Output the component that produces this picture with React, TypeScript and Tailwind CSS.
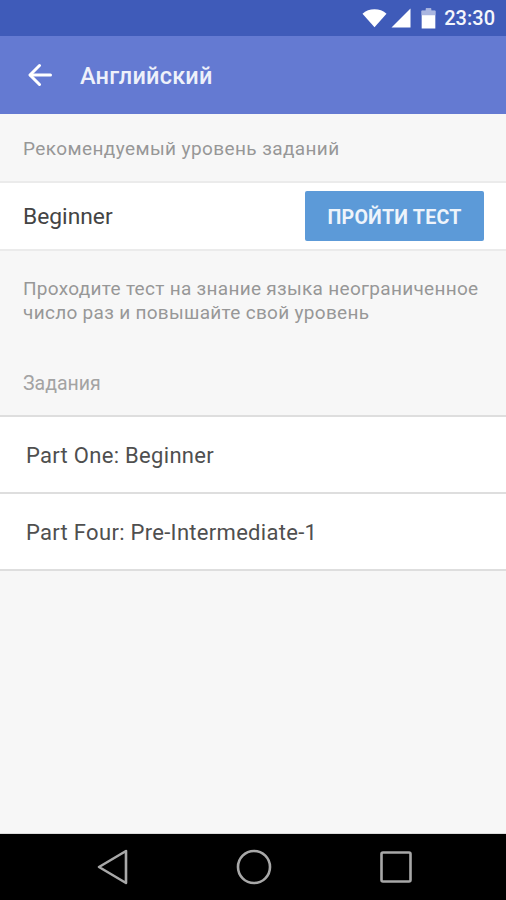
import React from 'react';

const StatusBar = () => (
  <div className="h-9 bg-[#3f5bb9] flex items-center justify-end pr-[11px] shrink-0">
    <svg width="25" height="20" viewBox="0 0 26 20" className="mr-[4px]">
      <path d="M0.5 5.5 C7 -0.5 19 -0.5 25.5 5.5 L13 19.5 Z" fill="#ffffff" />
    </svg>
    <svg width="20" height="20" viewBox="0 0 20 20" className="mr-[10px]">
      <path d="M0.5 19.5 L19.5 0.5 V19.5 Z" fill="#ffffff" />
    </svg>
    <svg width="15" height="21" viewBox="0 0 14 20" className="mr-[8px]">
      <path d="M4.5 0.5 H9.5 V2.5 H13.5 V19.5 H0.5 V2.5 H4.5 Z" fill="#ffffff" />
      <path d="M4.5 0.5 H9.5 V2.5 H13.5 V7 H0.5 V2.5 H4.5 Z" fill="#aab6e0" />
    </svg>
    <span className="text-[20px] leading-none font-medium text-[#f4f6fc]">23:30</span>
  </div>
);

const Toolbar = () => (
  <div className="h-[78px] bg-[#647ad2] flex items-center pl-[28px] shrink-0">
    <svg width="24" height="24" viewBox="0 0 24 24" fill="none" stroke="#ffffff" strokeWidth="3" strokeLinecap="round" strokeLinejoin="round">
      <path d="M22.5 12 H2.5" />
      <path d="M11.5 2.5 L2 12 L11.5 21.5" />
    </svg>
    <span className="ml-[28px] mt-[3px] text-[23.5px] leading-none font-medium text-[#eef1fa] tracking-[0.2px]">Английский</span>
  </div>
);

const NavBar = () => (
  <div className="h-[66px] bg-black flex items-center pl-[97px] shrink-0">
    <svg width="32" height="36" viewBox="0 0 32 36" fill="none" stroke="#a8a8a8" strokeWidth="2.6" strokeLinejoin="round">
      <path d="M2 18 L29 2 V34 Z" />
    </svg>
    <svg width="36" height="36" viewBox="0 0 36 36" fill="none" stroke="#a8a8a8" strokeWidth="2.6" className="ml-[107px]">
      <circle cx="18" cy="18" r="16" />
    </svg>
    <svg width="32" height="32" viewBox="0 0 32 32" fill="none" stroke="#a8a8a8" strokeWidth="2.6" strokeLinejoin="round" className="ml-[108px]">
      <rect x="1.5" y="1.5" width="29" height="29" rx="1.5" />
    </svg>
  </div>
);

const TaskRow: React.FC<{ title: string }> = ({ title }) => (
  <div className="h-[77px] bg-white border-b-2 border-[#dedede] flex items-center pl-[26px]">
    <span className="text-[22px] leading-none text-[#4f4f4f] tracking-[0.3px] mt-[2px]">{title}</span>
  </div>
);

export default function App() {
  return (
    <div className="w-[506px] h-[900px] flex flex-col bg-[#f7f7f7] font-['Roboto',sans-serif] overflow-hidden">
      <StatusBar />
      <Toolbar />

      <div className="flex-1 flex flex-col border-b border-[#dcdcdc]">
        <div className="h-[69px] flex items-center pl-[23px] border-b-2 border-[#ebebeb]">
          <span className="text-[19px] leading-none text-[#979797] tracking-[0.4px] mt-[2px]">Рекомендуемый уровень заданий</span>
        </div>

        <div className="h-[66px] bg-white flex items-center justify-between pl-[23px] pr-[22px]">
          <span className="text-[22.8px] leading-none text-[#444444] mt-[2px]">Beginner</span>
          <button className="w-[179px] h-[50px] pt-[3px] rounded-[2px] bg-[#5c9ad8] text-[19.6px] font-bold text-[#eef4fb] tracking-[0.2px]">
            ПРОЙТИ ТЕСТ
          </button>
        </div>

        <div className="border-t-2 border-[#ebebeb] pt-[26px] pl-[23px] pr-[20px] text-[19px] leading-[23.5px] text-[#979797] tracking-[0.3px]">
          Проходите тест на знание языка неограниченное число раз и повышайте свой уровень
        </div>

        <div className="mt-[48px] mb-[19px] pl-[23px] text-[19.5px] leading-[24px] text-[#a3a3a3]">Задания</div>

        <div className="border-t-2 border-[#dedede]">
          <TaskRow title="Part One: Beginner" />
          <TaskRow title="Part Four: Pre-Intermediate-1" />
        </div>
      </div>

      <NavBar />
    </div>
  );
}
